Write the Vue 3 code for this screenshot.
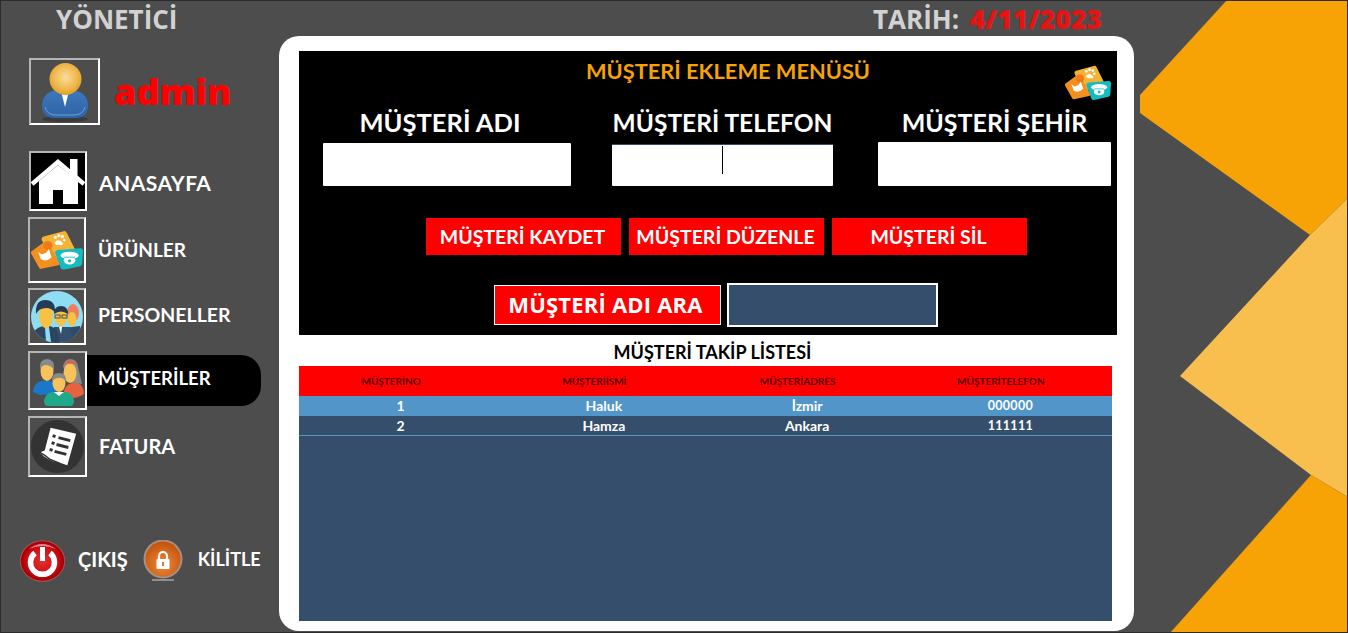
<template>
  <div class="page">
    <!-- arka plan sekilleri -->
    <svg class="bg-shapes" width="1348" height="633" viewBox="0 0 1348 633">
      <polygon points="1227,0 1140,95 1140,113 1310,235 1348,198 1348,0" fill="#f7a205" />
      <polygon points="1348,198 1310,235 1180,376 1311,475 1348,497" fill="#f8bf4f" />
      <polygon points="1311,475 1170,633 1348,633 1348,497" fill="#f7a205" />
    </svg>

    <svg width="0" height="0" class="defs">
      <defs>
        <symbol id="pets" viewBox="0 0 60 44">
          <path d="M16 10 L38 4 L47 22 L26 30Z" fill="#f5b335" stroke="#f5b335" stroke-width="6" stroke-linejoin="round" />
          <path d="M3 25 L18 14 L31 37 L12 41Z" fill="#f4901e" stroke="#f4901e" stroke-width="4" stroke-linejoin="round" />
          <circle cx="20" cy="17" r="5" fill="#ee7a1c" />
          <path d="M31 25 L56 23 L55 37 L37 41Z" fill="#14bcc0" stroke="#14bcc0" stroke-width="6" stroke-linejoin="round" />
          <circle cx="28" cy="8" r="1.800" fill="#fff" />
          <circle cx="32" cy="6" r="1.800" fill="#fff" />
          <circle cx="36" cy="7" r="1.800" fill="#fff" />
          <circle cx="38" cy="11" r="1.600" fill="#fff" />
          <path d="M27 14 Q32 8 37 15 Q35 18 32 16 Q29 18 27 14Z" fill="#fff" />
          <path d="M9 24 L13 27 L18 25 L21 21 L24 30 Q18 36 12 32Z" fill="#fff" />
          <ellipse cx="44" cy="28" rx="10" ry="4" fill="#fff" />
          <ellipse cx="44" cy="33.500" rx="6.500" ry="4.500" fill="#fff" />
          <path d="M38 30 L50 30" stroke="#14bcc0" stroke-width="1" />
          <circle cx="44" cy="34" r="1.800" fill="#14bcc0" />
        </symbol>
        <radialGradient id="headGrad" cx="50%" cy="45%" r="55%">
          <stop offset="0" stop-color="#f9dc9c" />
          <stop offset="0.7" stop-color="#f0b64a" />
          <stop offset="1" stop-color="#e09f22" />
        </radialGradient>
        <linearGradient id="bodyGrad" x1="0" y1="0" x2="0" y2="1">
          <stop offset="0" stop-color="#3c77bd" />
          <stop offset="1" stop-color="#2f64a6" />
        </linearGradient>
        <radialGradient id="powerGrad" cx="50%" cy="50%" r="52%">
          <stop offset="0" stop-color="#e53030" />
          <stop offset="0.7" stop-color="#c80b10" />
          <stop offset="0.9" stop-color="#a00006" />
          <stop offset="1" stop-color="#f0a0a0" />
        </radialGradient>
        <radialGradient id="lockGrad" cx="50%" cy="65%" r="60%">
          <stop offset="0" stop-color="#f0893a" />
          <stop offset="1" stop-color="#c4560f" />
        </radialGradient>
      </defs>
    </svg>

    <header class="topbar">
      <span class="role">YÖNETİCİ</span>
      <span class="date-box">TARİH: <b>4/11/2023</b></span>
    </header>

    <div class="content">
      <aside class="sidebar">
        <div class="user-row">
          <div class="thumb avatar">
            <svg width="60" height="62" viewBox="0 0 60 62">
              <ellipse cx="30" cy="58" rx="23" ry="3" fill="#3a3a3a" />
              <path d="M7 45 Q7 32 21 29 L39 29 Q53 32 53 45 Q53 57 40 57 L20 57 Q7 57 7 45Z" fill="url(#bodyGrad)" />
              <path d="M10 46 Q12 54 21 54 L39 54 Q48 54 50 46" fill="none" stroke="#6fa0d8" stroke-width="1" />
              <path d="M26 30 L30 46 L34 30Z" fill="#fff" />
              <circle cx="30.500" cy="18" r="16" fill="url(#headGrad)" />
            </svg>
          </div>
          <span class="user-name">admin</span>
        </div>

        <nav class="menu">
          <a v-for="item in menu" :key="item.label" class="menu-item" :class="[item.key, { active: item.active }]">
            <span class="thumb" :class="item.key + '-thumb'">
              <svg v-if="item.key === 'home'" width="54" height="56" viewBox="0 0 54 56">
                <path d="M8 28 L27 12 L47 28 L47 51 L32 51 L32 37 L22 37 L22 51 L8 51Z" fill="#fff" />
                <path d="M1 31 L27 9 L53 31" fill="none" stroke="#fff" stroke-width="4.500" />
                <rect x="39" y="6" width="7.500" height="17" fill="#fff" />
              </svg>
              <svg v-else-if="item.key === 'products'" width="54" height="40" viewBox="0 0 60 44">
                <use href="#pets" />
              </svg>
              <svg v-else-if="item.key === 'staff'" width="54" height="53" viewBox="0 0 54 53">
                <defs>
                  <clipPath id="staffClip"><circle cx="27" cy="27" r="26" /></clipPath>
                </defs>
                <circle cx="27" cy="27" r="26" fill="#8fdcf5" />
                <g clip-path="url(#staffClip)">
                  <ellipse cx="43" cy="23" rx="6" ry="9" fill="#ef7f5a" />
                  <path d="M34 38 L50 36 L54 54 L34 54Z" fill="#2f4a68" />
                  <ellipse cx="42" cy="29" rx="4.500" ry="7" fill="#f7c244" />
                  <path d="M24 37 L40 37 L44 54 L22 54Z" fill="#34506f" />
                  <path d="M29 37 L32 37 L31 44Z" fill="#fff" />
                  <ellipse cx="31" cy="27" rx="6" ry="9" fill="#f7c244" />
                  <path d="M24 24 Q24 16 31 16 Q38 16 38 24 Q31 19 24 24Z" fill="#24384f" />
                  <rect x="25" y="25" width="5" height="3" fill="none" stroke="#24384f" stroke-width="0.800" />
                  <rect x="32" y="25" width="5" height="3" fill="none" stroke="#24384f" stroke-width="0.800" />
                  <path d="M2 54 L4 41 Q8 37 13 36 L20 36 Q26 38 28 43 L30 54Z" fill="#2c4560" />
                  <path d="M15 37 L19 37 L21 52 L16 52Z" fill="#8fdcf5" />
                  <ellipse cx="16" cy="26" rx="7" ry="12" fill="#f7c244" />
                  <path d="M6 24 Q5 10 15 10 Q26 10 25 23 Q22 18 16 18 Q9 18 6 24Z" fill="#263c55" />
                </g>
              </svg>
              <svg v-else-if="item.key === 'customers'" width="55" height="55" viewBox="0 0 55 55">
                <path d="M34 38 Q36 31 42 30 L48 30 Q54 33 54 41 Q48 45 42 45 L34 44Z" fill="#e8623f" />
                <path d="M33 13 Q35 6 40 6 Q47 6 48 14 L52 31 L38 29Z" fill="#8a8a8a" />
                <ellipse cx="40" cy="20" rx="6.500" ry="10" fill="#f7c25a" />
                <path d="M34 12 Q40 3 47 12 Q40 9 34 12Z" fill="#d9604a" />
                <path d="M3 39 Q4 30 11 28 L21 28 Q26 30 27 38 Q20 42 10 42Z" fill="#1a78c8" />
                <ellipse cx="17" cy="18" rx="6.500" ry="10" fill="#f7c25a" />
                <path d="M10 17 Q9 6 17 6 Q25 6 24 17 Q21 12 15 12 Q11 13 10 17Z" fill="#8a8a8a" />
                <path d="M14 48 Q15 41 22 39 L36 39 Q43 41 44 48 Q44 53 40 53 L18 53 Q14 53 14 48Z" fill="#1fa98a" />
                <path d="M24 39 L29 43 L34 39Z" fill="#fff" />
                <ellipse cx="29" cy="30" rx="6.500" ry="9" fill="#f7c25a" />
                <path d="M22 29 Q21 20 29 20 Q37 20 36 29 Q33 24 28 25 Q24 25 22 29Z" fill="#8a8a8a" />
              </svg>
              <svg v-else width="55" height="57" viewBox="0 0 56 58">
                <circle cx="28" cy="29" r="27" fill="#333" />
                <path d="M21 10 L47 16 L38 48 L29 45 Q24 46 14 39 L10 35 L15 33Z" fill="#fff" />
                <path d="M10 35 Q16 38 20 42 L30 46" fill="none" stroke="#333" stroke-width="1.500" />
                <path d="M23 18 L26 19 M22 25 L25 26 M20 32 L23 33" stroke="#333" stroke-width="3" />
                <path d="M29 20 L41 23 M27 27 L39 30 M25 34 L37 37" stroke="#333" stroke-width="3" />
              </svg>
            </span>
            <span class="menu-label">{{ item.label }}</span>
          </a>
        </nav>

        <div class="bottom-actions">
          <svg width="45" height="42" viewBox="0 0 45 42">
            <ellipse cx="22.500" cy="21" rx="22.500" ry="20.500" fill="url(#powerGrad)" />
            <path d="M15 13 A12 12 0 1 0 30 13" fill="none" stroke="#fff" stroke-width="5.500" />
            <rect x="20" y="7" width="5" height="14" fill="#fff" />
            <path d="M9 9 Q22 -1 36 9 Q22 3 9 9Z" fill="#fff" opacity="0.5" />
          </svg>
          <span class="exit-label">ÇIKIŞ</span>
          <svg width="42" height="42" viewBox="0 0 42 42">
            <rect x="10" y="39" width="22" height="2" fill="#8f8f8f" />
            <circle cx="21" cy="19" r="19.500" fill="#a98f7f" />
            <circle cx="21" cy="19" r="17.500" fill="url(#lockGrad)" />
            <path d="M17 19 V16 A4 4 0 0 1 25 16 V19" fill="none" stroke="#fff" stroke-width="2.200" />
            <rect x="14.500" y="19" width="13" height="10" rx="1" fill="#fff" />
            <rect x="20" y="22" width="2" height="4" fill="#e07a2c" />
          </svg>
          <span class="lock-label">KİLİTLE</span>
        </div>
      </aside>

      <main class="card">
        <section class="form-panel">
          <h2 class="panel-title">MÜŞTERİ EKLEME MENÜSÜ</h2>
          <svg class="panel-icon" width="48" height="35" viewBox="0 0 60 44">
            <use href="#pets" />
          </svg>

          <div class="fields">
            <div class="field field-name">
              <label>MÜŞTERİ ADI</label>
              <div class="fake-input"></div>
            </div>
            <div class="field field-phone">
              <label>MÜŞTERİ TELEFON</label>
              <div class="fake-input"><i class="caret"></i></div>
            </div>
            <div class="field field-city">
              <label>MÜŞTERİ ŞEHİR</label>
              <div class="fake-input"></div>
            </div>
          </div>

          <div class="actions">
            <button>MÜŞTERİ KAYDET</button>
            <button>MÜŞTERİ DÜZENLE</button>
            <button>MÜŞTERİ SİL</button>
          </div>

          <div class="search-row">
            <button class="search-btn">MÜŞTERİ ADI ARA</button>
            <div class="search-input"></div>
          </div>
        </section>

        <h3 class="list-title">MÜŞTERİ TAKİP LİSTESİ</h3>

        <div class="grid-wrap">
          <table class="grid">
            <thead>
              <tr>
                <th>MÜŞTERİNO</th>
                <th>MÜŞTERİİSMİ</th>
                <th>MÜŞTERİADRES</th>
                <th>MÜŞTERİTELEFON</th>
              </tr>
            </thead>
            <tbody>
              <tr v-for="(row, i) in rows" :key="row.no" :class="{ selected: i === 0 }">
                <td>{{ row.no }}</td>
                <td>{{ row.name }}</td>
                <td>{{ row.city }}</td>
                <td>{{ row.phone }}</td>
              </tr>
            </tbody>
          </table>
        </div>
      </main>
    </div>
  </div>
</template>

<script setup>
const menu = [
  { key: "home", label: "ANASAYFA" },
  { key: "products", label: "ÜRÜNLER" },
  { key: "staff", label: "PERSONELLER" },
  { key: "customers", label: "MÜŞTERİLER", active: true },
  { key: "invoice", label: "FATURA" },
];

const rows = [
  { no: 1, name: "Haluk", city: "İzmir", phone: "000000" },
  { no: 2, name: "Hamza", city: "Ankara", phone: "111111" },
];
</script>

<style>
html,
body {
  margin: 0;
  overflow: hidden;
}
</style>

<style scoped>
* {
  box-sizing: border-box;
}

.page {
  position: relative;
  width: 1348px;
  height: 633px;
  overflow: hidden;
  background: #4d4d4d;
  border: 1px solid #2b2b2b;
  font-family: Lato, "Open Sans", sans-serif;
  font-weight: 700;
}

.bg-shapes {
  position: absolute;
  left: -1px;
  top: -1px;
}

.defs {
  position: absolute;
}

.topbar {
  position: relative;
  height: 35px;
  display: flex;
  align-items: center;
  padding: 1px 0 0 55px;
  font-family: "Open Sans", sans-serif;
  font-weight: 700;
  font-size: 26px;
  line-height: 35px;
  color: #d2d2d2;
}

.role {
  width: 817px;
}

.date-box b {
  color: #e81212;
  font-size: 26.500px;
  margin-left: 4px;
}

.content {
  position: relative;
  display: flex;
  height: 595px;
}

.sidebar {
  width: 278px;
  display: flex;
  flex-direction: column;
  color: #fff;
}

.user-row {
  display: flex;
  align-items: center;
  gap: 14px;
  margin: 22px 0 0 28px;
}

.thumb {
  display: flex;
  align-items: center;
  justify-content: center;
  flex: none;
  border: 2px solid;
  border-color: #b5b5b5 #fff #fff #b5b5b5;
  overflow: hidden;
}

.avatar {
  width: 71px;
  height: 67px;
}

.user-name {
  font-family: "Open Sans", sans-serif;
  font-weight: 800;
  font-size: 36px;
  color: #f00;
  line-height: 1;
}

.menu {
  display: flex;
  flex-direction: column;
  margin-top: 26px;
}

.menu-item {
  display: flex;
  align-items: center;
  font-size: 19.500px;
  margin-left: 27px;
}

.menu-item .thumb {
  width: 58px;
  height: 58px;
}

.menu-label {
  margin-left: 12px;
  flex: 1;
}

.home {
  margin-left: 28px;
  margin-bottom: 6px;
  font-size: 21px;
  letter-spacing: 0.5px;
}

.home-thumb {
  height: 60px !important;
  background: #000;
}

.home .menu-label {
  margin-top: 2px;
}

.products {
  margin-bottom: 5px;
  font-size: 19px;
}

.products-thumb {
  height: 66px !important;
}

.products .menu-label {
  margin-bottom: 1px;
}

.staff {
  margin-bottom: 6px;
}

.staff-thumb {
  height: 57px !important;
}

.staff .menu-label {
  margin-bottom: 5px;
}

.customers {
  margin-bottom: 6px;
  font-size: 18.500px;
}

.customers .thumb {
  width: 59px;
  height: 59px;
}

.customers .menu-label {
  margin-left: 0;
  margin-bottom: 1px;
  padding-left: 11px;
  width: 174px;
  flex: none;
  height: 51px;
  line-height: 46px;
  background: #000;
  border-radius: 0 20px 20px 0;
}

.invoice .thumb {
  width: 59px;
  height: 61px;
}

.invoice .menu-label {
  margin-bottom: 2px;
  font-size: 20px;
}

.bottom-actions {
  display: flex;
  align-items: center;
  margin: 63px 0 0 19px;
  font-size: 20px;
}

.exit-label {
  margin: 0 14px 4px 13px;
}

.lock-label {
  margin: 0 0 4px 14px;
  font-size: 18px;
}

.card {
  width: 855px;
  height: 595px;
  background: #fff;
  border-radius: 20px;
  padding: 15px 17px 10px 20px;
}

.form-panel {
  position: relative;
  height: 284px;
  background: #000;
  display: flex;
  flex-direction: column;
}

.panel-title {
  margin: 6px 0 0;
  padding-left: 40px;
  text-align: center;
  font-size: 21.800px;
  line-height: 28px;
  font-weight: 700;
  color: #f7a205;
}

.panel-icon {
  position: absolute;
  top: 14px;
  right: 5px;
}

.fields {
  display: flex;
  align-items: flex-end;
  margin-top: 32px;
  padding-left: 24px;
  height: 69px;
}

.field {
  display: flex;
  flex-direction: column;
}

.field label {
  font-size: 25px;
  line-height: 30px;
  color: #fff;
  text-align: center;
  white-space: nowrap;
}

.fake-input {
  position: relative;
  background: #fff;
  margin-top: 6px;
  border-radius: 1px;
}

.field-name {
  width: 248px;
}

.field-name label {
  padding-right: 14px;
  font-size: 25.500px;
}

.field-name .fake-input {
  height: 43px;
}

.field-phone {
  width: 221px;
  margin-left: 41px;
}

.field-phone label {
  font-size: 24.500px;
}

.field-phone .fake-input {
  height: 42px;
  border-top: 1px solid #34506f;
}

.field-city {
  width: 233px;
  margin-left: 45px;
}

.field-city .fake-input {
  height: 44px;
  margin-top: 5px;
}

.caret {
  position: absolute;
  left: 110px;
  top: 1px;
  width: 1px;
  height: 28px;
  background: #000;
}

.actions {
  display: flex;
  justify-content: flex-start;
  gap: 8px;
  margin: 32px 0 0 127px;
}

.actions button {
  width: 195px;
  height: 37px;
  border: none;
  padding: 0 2px 0 0;
  background: #f00;
  color: #fff;
  font-family: Lato, "Open Sans", sans-serif;
  font-weight: 700;
  font-size: 19.500px;
}

.search-row {
  display: flex;
  align-items: center;
  margin: 28px 0 0 195px;
}

.search-btn {
  width: 227px;
  height: 40px;
  border: 1px solid #fff;
  padding: 0 4px 2px 0;
  background: #f00;
  color: #fff;
  font-family: "Open Sans", sans-serif;
  font-weight: 700;
  font-size: 22px;
  letter-spacing: 0.2px;
}

.search-input {
  width: 211px;
  height: 44px;
  margin-left: 6px;
  background: #354e6c;
  border: 2px solid #fff;
}

.list-title {
  margin: 3px 0 0;
  padding-left: 9px;
  height: 28px;
  text-align: center;
  font-size: 18px;
  line-height: 29px;
  font-weight: 700;
  color: #000;
}

.grid-wrap {
  width: 813px;
  height: 255px;
  background: #354e6c;
}

.grid {
  width: 100%;
  border-collapse: collapse;
  table-layout: fixed;
}

.grid th {
  height: 30px;
  padding: 0 19px 0 0;
  background: #f00;
  color: #5a0000;
  font-size: 10px;
  font-weight: 700;
}

.grid td {
  height: 19.500px;
  padding: 0;
  text-align: center;
  vertical-align: top;
  line-height: 19px;
  color: #fff;
  font-size: 14px;
  border-bottom: 1px solid #5296c9;
}

.grid td:last-child {
  font-size: 12.500px;
  letter-spacing: 0.3px;
}

.grid tr.selected td {
  background: #5296c9;
  border-bottom: none;
  height: 20px;
}
</style>
